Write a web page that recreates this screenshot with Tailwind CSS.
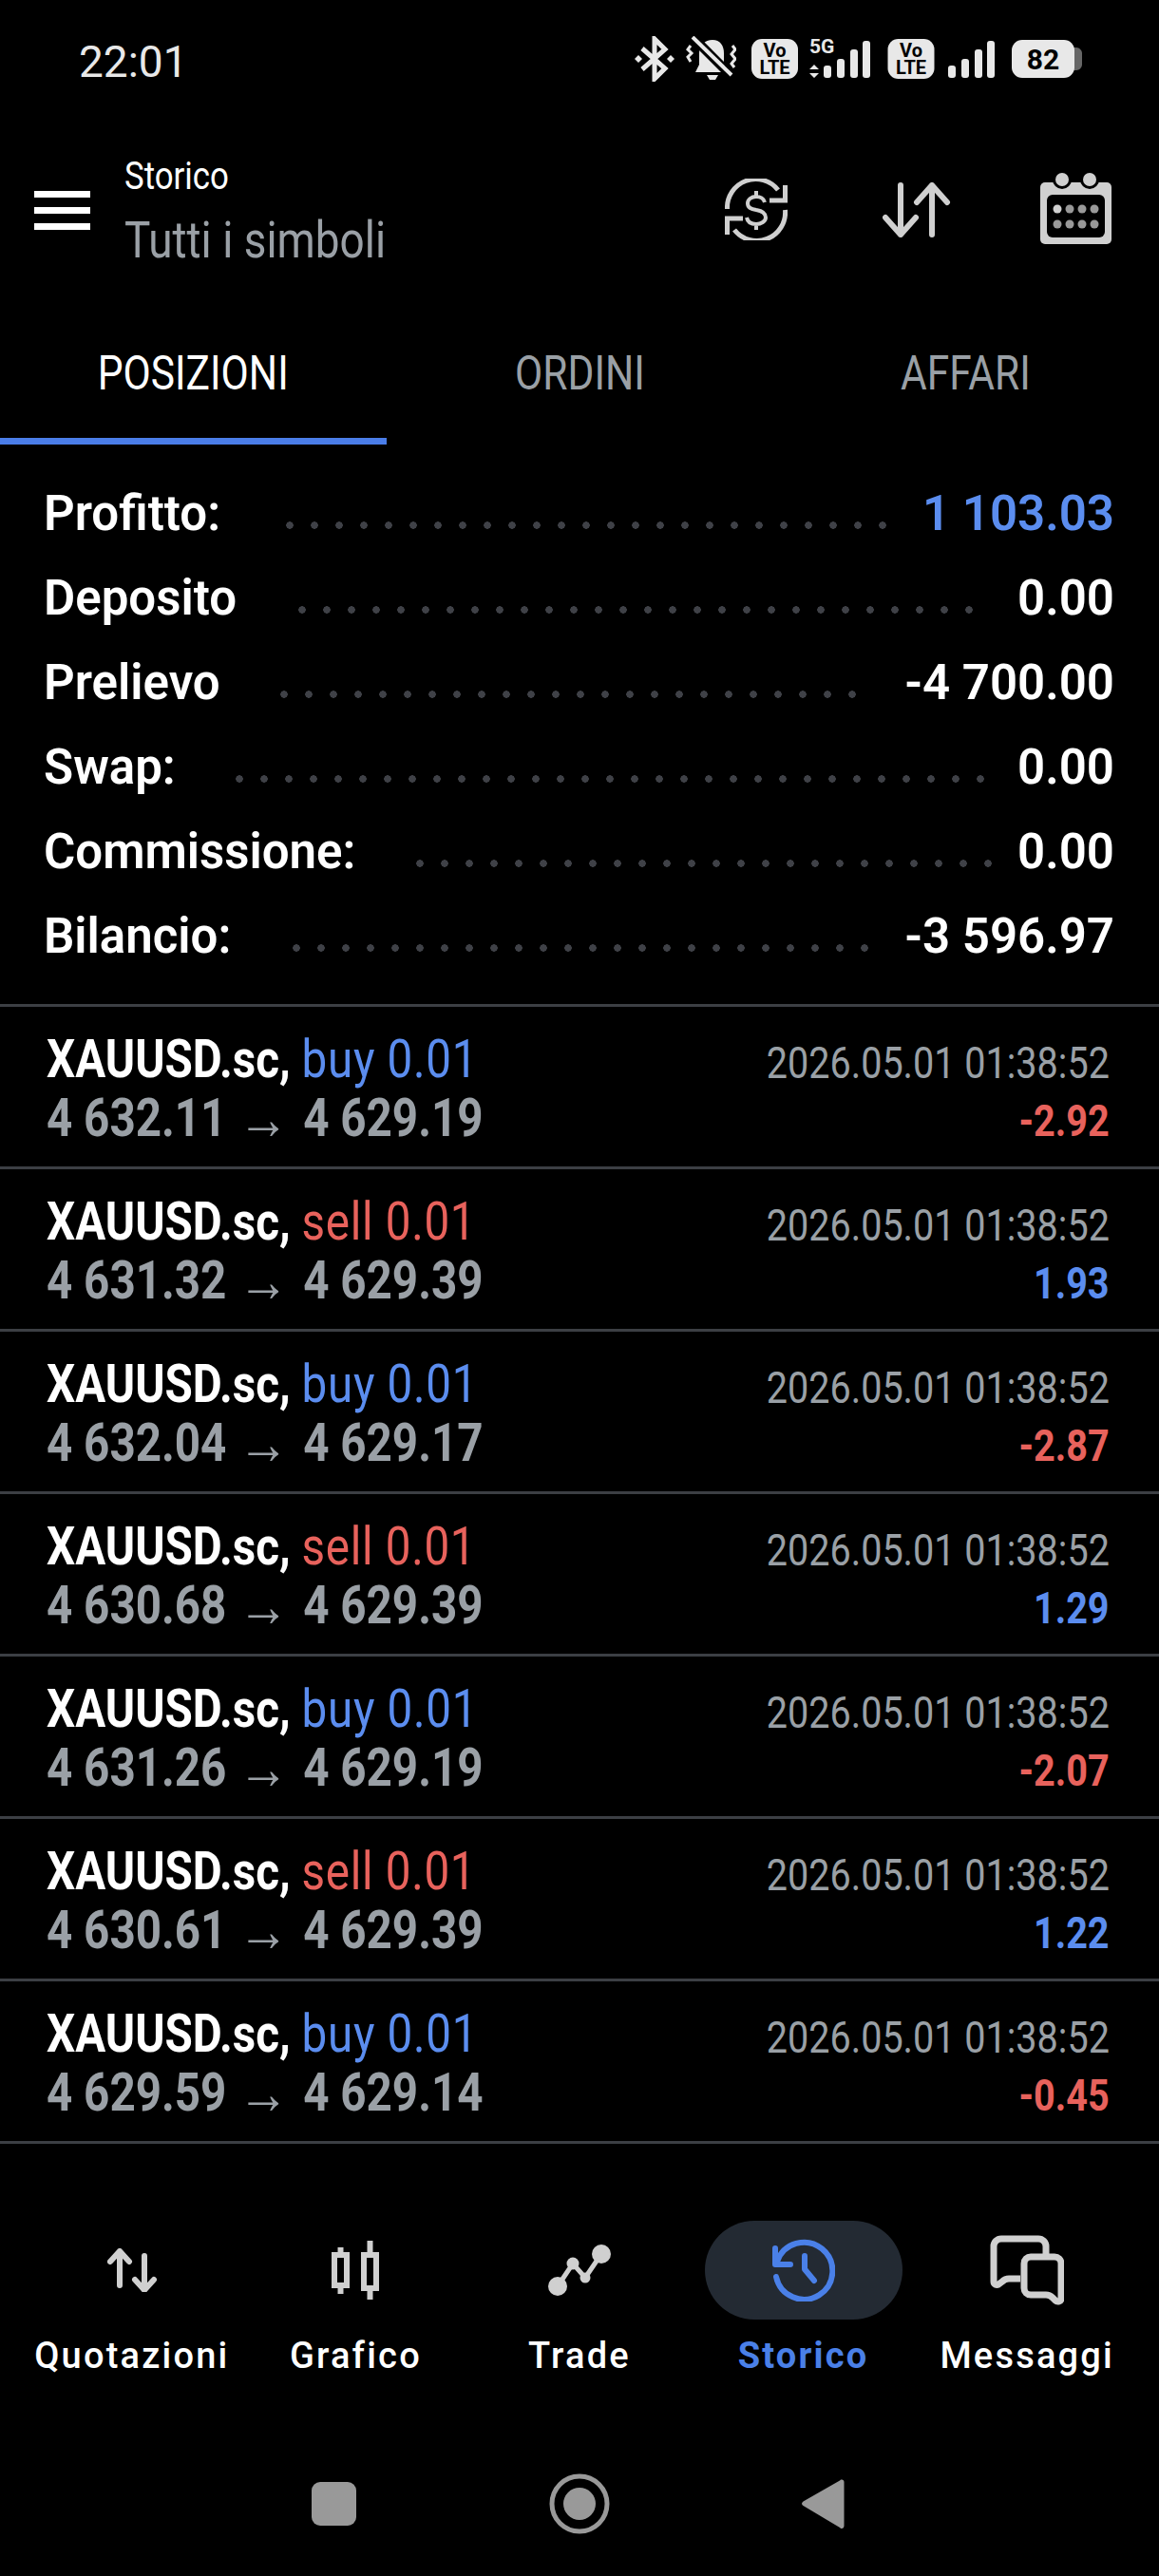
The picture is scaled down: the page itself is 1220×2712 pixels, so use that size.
<!DOCTYPE html>
<html lang="it" class="bg-black">
<head>
  <meta charset="UTF-8">
  <meta name="viewport" content="width=device-width, initial-scale=1.0">
  <title>Storico</title>
  <script src="https://cdn.jsdelivr.net/npm/@tailwindcss/browser@4"></script>
</head>
<body class="w-[1220px] h-[2712px] overflow-hidden bg-black text-white font-[Roboto,sans-serif]">

  <!-- status bar -->
  <div class="h-[130px] flex items-start pt-[38px] pl-[83px] pr-[80px]">
    <span class="text-[46px] leading-[54px] text-[#e8e8e8]">22:01</span>
    <div class="ml-auto flex text-[#e8e8e8]">
      <svg class="mr-[12px]" width="42" height="48" viewBox="0 0 42 48" fill="none" stroke="#e8e8e8" stroke-width="5"><path d="M8 13l24 21-11 11V3l11 11L8 35"/><path d="M4 20l4 4-4 4-4-4zM38 20l4 4-4 4-4-4z" fill="#e8e8e8" stroke="none"/></svg>
      <svg class="mr-[16px]" width="53" height="48" viewBox="0 0 53 48" fill="none"><path d="M28 4c8 0 12 6 12 14v12l4 8H10l4-8V18c0-8 6-14 14-14z" fill="#e8e8e8"/><path d="M22 41h12l-3 5h-6z" fill="#e8e8e8"/><path d="M6 0l42 42" stroke="#000" stroke-width="10"/><path d="M7 1l41 40" stroke="#e8e8e8" stroke-width="4"/><path d="M5 10l-3 4 4 4-4 4 3 5M49 10l3 4-4 5 4 5-4 5 3 4" stroke="#e8e8e8" stroke-width="3"/></svg>
      <svg class="mr-[12px]" width="49" height="48" viewBox="0 0 49 48"><rect y="3" width="49" height="42" rx="11" fill="#e8e8e8"/><text text-anchor="middle" font-family="Roboto" font-weight="700" font-size="20" fill="#000"><tspan x="24.5" y="22">Vo</tspan><tspan x="24.5" y="40">LTE</tspan></text></svg>
      <svg class="mr-[16px]" width="66" height="48" viewBox="0 0 66 48"><text x="0" y="18" font-family="Roboto" font-weight="700" font-size="21" fill="#e8e8e8">5G</text><path d="M5 30l5 5H0zM5 44l5-5H0z" fill="#e8e8e8"/><rect x="15" y="31" width="8" height="13" rx="3" fill="#e8e8e8"/><rect x="29" y="24" width="8" height="20" rx="3" fill="#e8e8e8"/><rect x="43" y="14" width="8" height="30" rx="3" fill="#e8e8e8"/><rect x="56" y="5" width="8" height="39" rx="3" fill="#e8e8e8"/></svg>
      <svg class="mr-[14px]" width="50" height="48" viewBox="0 0 49 48"><rect y="3" width="49" height="42" rx="11" fill="#e8e8e8"/><text text-anchor="middle" font-family="Roboto" font-weight="700" font-size="20" fill="#000"><tspan x="24.5" y="22">Vo</tspan><tspan x="24.5" y="40">LTE</tspan></text></svg>
      <svg class="mr-[18px]" width="49" height="48" viewBox="0 0 49 48"><rect x="0" y="31" width="8" height="13" rx="3" fill="#e8e8e8"/><rect x="14" y="24" width="8" height="20" rx="3" fill="#e8e8e8"/><rect x="28" y="14" width="8" height="30" rx="3" fill="#e8e8e8"/><rect x="41" y="5" width="8" height="39" rx="3" fill="#e8e8e8"/></svg>
      <svg width="75" height="48" viewBox="0 0 75 48"><path d="M65 12h3c3 0 6 3 6 6v12c0 3-3 6-6 6h-3z" fill="#666"/><rect y="4" width="66" height="40" rx="11" fill="#e8e8e8"/><text x="33" y="35" text-anchor="middle" font-family="Roboto" font-weight="700" font-size="30" fill="#000">82</text></svg>
    </div>
  </div>

  <!-- header -->
  <header class="h-[190px] flex items-start">
    <div class="w-[59px] ml-[36px] mt-[71px] flex flex-col gap-[10px]">
      <div class="h-[7px] bg-white"></div>
      <div class="h-[7px] bg-white"></div>
      <div class="h-[7px] bg-white"></div>
    </div>
    <div class="ml-[36px] mt-[33px] flex flex-col">
      <span class="text-[40px] leading-[46px] whitespace-nowrap origin-left scale-x-[0.87]">Storico</span>
      <span class="text-[54px] leading-[62px] mt-[13px] text-[#9aa0a6] whitespace-nowrap origin-left scale-x-[0.85]">Tutti i simboli</span>
    </div>
    <svg class="ml-auto mt-[58px]" width="66" height="65" viewBox="0 0 66 65" fill="none" stroke="#d0d0d0" stroke-width="5">
      <path d="M2.500 32A30 30 0 0 1 56 12"/><path d="M63.500 7v16H47"/><path d="M63.500 33A30 30 0 0 1 10 54"/><path d="M2.500 59V42H19"/>
      <path d="M42 25c-1-4-5-6-9-6-5 0-9 3-9 7 0 5 4 6 9 7 6 1 10 3 10 8 0 4-5 7-10 7-5 0-9-2-10-7M33 13v6M33 48v6" stroke-width="4"/>
    </svg>
    <svg class="ml-[100px] mt-[62px]" width="72" height="58" viewBox="0 0 72 58" fill="none" stroke="#d0d0d0" stroke-width="6" stroke-linecap="round" stroke-linejoin="round">
      <path d="M19 3v52M3 37l16 18 16-18"/><path d="M52 3v52M36 21L52 3l16 18"/>
    </svg>
    <svg class="ml-[94px] mr-[50px] mt-[52px]" width="75" height="75" viewBox="0 0 75 75">
      <rect y="10" width="75" height="65" rx="5" fill="#d0d0d0"/><rect x="7" y="23" width="61" height="45" rx="6" fill="#000"/>
      <circle cx="23" cy="7" r="10" fill="#000"/><circle cx="52" cy="7" r="10" fill="#000"/><circle cx="23" cy="7" r="7" fill="#d0d0d0"/><circle cx="52" cy="7" r="7" fill="#d0d0d0"/>
      <circle cx="18" cy="38" r="4.500" fill="#d0d0d0"/><circle cx="31" cy="38" r="4.500" fill="#999"/><circle cx="44" cy="38" r="4.500" fill="#999"/><circle cx="57" cy="38" r="4.500" fill="#999"/>
      <circle cx="18" cy="54" r="4.500" fill="#999"/><circle cx="31" cy="54" r="4.500" fill="#999"/><circle cx="44" cy="54" r="4.500" fill="#999"/><circle cx="57" cy="54" r="4.500" fill="#999"/>
    </svg>
  </header>

  <!-- tabs -->
  <nav class="h-[148px] grid grid-cols-3">
    <div class="flex flex-col items-center border-b-[7px] border-[#4a7de8]"><span class="mt-[45px] text-[50px] leading-[56px] scale-x-[0.85]">POSIZIONI</span></div>
    <div class="flex flex-col items-center"><span class="mt-[45px] text-[50px] leading-[56px] text-[#9aa0a6] scale-x-[0.85]">ORDINI</span></div>
    <div class="flex flex-col items-center"><span class="mt-[45px] text-[50px] leading-[56px] text-[#9aa0a6] scale-x-[0.85]">AFFARI</span></div>
  </nav>

  <!-- summary -->
  <section class="h-[589px] pt-[29px] pl-[46px] pr-[47px] flex flex-col text-[51px] leading-[88px] font-semibold">
    <div class="h-[89px] flex"><span class="w-[246px]">Profitto:</span><div class="w-[650px] h-[8px] mt-[52px] bg-[radial-gradient(circle,#3f4147_3.5px,transparent_4px)] bg-[length:26px_8px] bg-repeat-x"></div><span class="flex-1 text-right text-[#5b8def] whitespace-nowrap">1 103.03</span></div>
    <div class="h-[89px] flex"><span class="w-[259px]">Deposito</span><div class="w-[728px] h-[8px] mt-[52px] bg-[radial-gradient(circle,#3f4147_3.5px,transparent_4px)] bg-[length:26px_8px] bg-repeat-x"></div><span class="flex-1 text-right">0.00</span></div>
    <div class="h-[89px] flex"><span class="w-[240px]">Prelievo</span><div class="w-[624px] h-[8px] mt-[52px] bg-[radial-gradient(circle,#3f4147_3.5px,transparent_4px)] bg-[length:26px_8px] bg-repeat-x"></div><span class="flex-1 text-right whitespace-nowrap">-4 700.00</span></div>
    <div class="h-[89px] flex"><span class="w-[193px]">Swap:</span><div class="w-[806px] h-[8px] mt-[52px] bg-[radial-gradient(circle,#3f4147_3.5px,transparent_4px)] bg-[length:26px_8px] bg-repeat-x"></div><span class="flex-1 text-right">0.00</span></div>
    <div class="h-[89px] flex"><span class="w-[383px] whitespace-nowrap">Commissione:</span><div class="w-[624px] h-[8px] mt-[52px] bg-[radial-gradient(circle,#3f4147_3.5px,transparent_4px)] bg-[length:26px_8px] bg-repeat-x"></div><span class="flex-1 text-right">0.00</span></div>
    <div class="h-[89px] flex"><span class="w-[253px]">Bilancio:</span><div class="w-[624px] h-[8px] mt-[52px] bg-[radial-gradient(circle,#3f4147_3.5px,transparent_4px)] bg-[length:26px_8px] bg-repeat-x"></div><span class="flex-1 text-right whitespace-nowrap">-3 596.97</span></div>
  </section>

  <!-- deals -->
  <section class="border-t-[3px] border-[#3c3f44]">
    <div class="h-[171px] border-b-[3px] border-[#3c3f44] flex justify-between pl-[49px] pr-[52px] pt-[24px]">
      <div class="flex flex-col">
        <div class="text-[55px] leading-[62px] whitespace-nowrap origin-left scale-x-[0.865]"><span class="font-bold">XAUUSD.sc,</span> <span class="text-[#5b8def] tracking-[0.8px]">buy 0.01</span></div>
        <div class="text-[55px] leading-[62px] font-bold text-[#9aa0a6] whitespace-nowrap origin-left scale-x-[0.865]">4 632.11 <span class="text-[62px] leading-none font-normal align-[-3px] mr-[4px]">→</span> 4 629.19</div>
      </div>
      <div class="flex flex-col items-end mt-[5px]">
        <span class="text-[46px] leading-[61px] text-[#9aa0a6] whitespace-nowrap origin-right scale-x-[0.86]">2026.05.01 01:38:52</span>
        <span class="text-[46px] leading-[61px] font-bold text-[#e8625c] origin-right scale-x-[0.86]">-2.92</span>
      </div>
    </div>
    <div class="h-[171px] border-b-[3px] border-[#3c3f44] flex justify-between pl-[49px] pr-[52px] pt-[24px]">
      <div class="flex flex-col">
        <div class="text-[55px] leading-[62px] whitespace-nowrap origin-left scale-x-[0.865]"><span class="font-bold">XAUUSD.sc,</span> <span class="text-[#e8625c] tracking-[0.8px]">sell 0.01</span></div>
        <div class="text-[55px] leading-[62px] font-bold text-[#9aa0a6] whitespace-nowrap origin-left scale-x-[0.865]">4 631.32 <span class="text-[62px] leading-none font-normal align-[-3px] mr-[4px]">→</span> 4 629.39</div>
      </div>
      <div class="flex flex-col items-end mt-[5px]">
        <span class="text-[46px] leading-[61px] text-[#9aa0a6] whitespace-nowrap origin-right scale-x-[0.86]">2026.05.01 01:38:52</span>
        <span class="text-[46px] leading-[61px] font-bold text-[#5b8def] origin-right scale-x-[0.86]">1.93</span>
      </div>
    </div>
    <div class="h-[171px] border-b-[3px] border-[#3c3f44] flex justify-between pl-[49px] pr-[52px] pt-[24px]">
      <div class="flex flex-col">
        <div class="text-[55px] leading-[62px] whitespace-nowrap origin-left scale-x-[0.865]"><span class="font-bold">XAUUSD.sc,</span> <span class="text-[#5b8def] tracking-[0.8px]">buy 0.01</span></div>
        <div class="text-[55px] leading-[62px] font-bold text-[#9aa0a6] whitespace-nowrap origin-left scale-x-[0.865]">4 632.04 <span class="text-[62px] leading-none font-normal align-[-3px] mr-[4px]">→</span> 4 629.17</div>
      </div>
      <div class="flex flex-col items-end mt-[5px]">
        <span class="text-[46px] leading-[61px] text-[#9aa0a6] whitespace-nowrap origin-right scale-x-[0.86]">2026.05.01 01:38:52</span>
        <span class="text-[46px] leading-[61px] font-bold text-[#e8625c] origin-right scale-x-[0.86]">-2.87</span>
      </div>
    </div>
    <div class="h-[171px] border-b-[3px] border-[#3c3f44] flex justify-between pl-[49px] pr-[52px] pt-[24px]">
      <div class="flex flex-col">
        <div class="text-[55px] leading-[62px] whitespace-nowrap origin-left scale-x-[0.865]"><span class="font-bold">XAUUSD.sc,</span> <span class="text-[#e8625c] tracking-[0.8px]">sell 0.01</span></div>
        <div class="text-[55px] leading-[62px] font-bold text-[#9aa0a6] whitespace-nowrap origin-left scale-x-[0.865]">4 630.68 <span class="text-[62px] leading-none font-normal align-[-3px] mr-[4px]">→</span> 4 629.39</div>
      </div>
      <div class="flex flex-col items-end mt-[5px]">
        <span class="text-[46px] leading-[61px] text-[#9aa0a6] whitespace-nowrap origin-right scale-x-[0.86]">2026.05.01 01:38:52</span>
        <span class="text-[46px] leading-[61px] font-bold text-[#5b8def] origin-right scale-x-[0.86]">1.29</span>
      </div>
    </div>
    <div class="h-[171px] border-b-[3px] border-[#3c3f44] flex justify-between pl-[49px] pr-[52px] pt-[24px]">
      <div class="flex flex-col">
        <div class="text-[55px] leading-[62px] whitespace-nowrap origin-left scale-x-[0.865]"><span class="font-bold">XAUUSD.sc,</span> <span class="text-[#5b8def] tracking-[0.8px]">buy 0.01</span></div>
        <div class="text-[55px] leading-[62px] font-bold text-[#9aa0a6] whitespace-nowrap origin-left scale-x-[0.865]">4 631.26 <span class="text-[62px] leading-none font-normal align-[-3px] mr-[4px]">→</span> 4 629.19</div>
      </div>
      <div class="flex flex-col items-end mt-[5px]">
        <span class="text-[46px] leading-[61px] text-[#9aa0a6] whitespace-nowrap origin-right scale-x-[0.86]">2026.05.01 01:38:52</span>
        <span class="text-[46px] leading-[61px] font-bold text-[#e8625c] origin-right scale-x-[0.86]">-2.07</span>
      </div>
    </div>
    <div class="h-[171px] border-b-[3px] border-[#3c3f44] flex justify-between pl-[49px] pr-[52px] pt-[24px]">
      <div class="flex flex-col">
        <div class="text-[55px] leading-[62px] whitespace-nowrap origin-left scale-x-[0.865]"><span class="font-bold">XAUUSD.sc,</span> <span class="text-[#e8625c] tracking-[0.8px]">sell 0.01</span></div>
        <div class="text-[55px] leading-[62px] font-bold text-[#9aa0a6] whitespace-nowrap origin-left scale-x-[0.865]">4 630.61 <span class="text-[62px] leading-none font-normal align-[-3px] mr-[4px]">→</span> 4 629.39</div>
      </div>
      <div class="flex flex-col items-end mt-[5px]">
        <span class="text-[46px] leading-[61px] text-[#9aa0a6] whitespace-nowrap origin-right scale-x-[0.86]">2026.05.01 01:38:52</span>
        <span class="text-[46px] leading-[61px] font-bold text-[#5b8def] origin-right scale-x-[0.86]">1.22</span>
      </div>
    </div>
    <div class="h-[171px] border-b-[3px] border-[#3c3f44] flex justify-between pl-[49px] pr-[52px] pt-[24px]">
      <div class="flex flex-col">
        <div class="text-[55px] leading-[62px] whitespace-nowrap origin-left scale-x-[0.865]"><span class="font-bold">XAUUSD.sc,</span> <span class="text-[#5b8def] tracking-[0.8px]">buy 0.01</span></div>
        <div class="text-[55px] leading-[62px] font-bold text-[#9aa0a6] whitespace-nowrap origin-left scale-x-[0.865]">4 629.59 <span class="text-[62px] leading-none font-normal align-[-3px] mr-[4px]">→</span> 4 629.14</div>
      </div>
      <div class="flex flex-col items-end mt-[5px]">
        <span class="text-[46px] leading-[61px] text-[#9aa0a6] whitespace-nowrap origin-right scale-x-[0.86]">2026.05.01 01:38:52</span>
        <span class="text-[46px] leading-[61px] font-bold text-[#e8625c] origin-right scale-x-[0.86]">-0.45</span>
      </div>
    </div>
  </section>

  <!-- bottom navigation -->
  <nav class="mt-[81px] px-[21px] grid grid-cols-5 text-[38px] leading-[44px] tracking-[2.2px] font-medium text-center">
    <div class="flex flex-col items-center">
      <div class="h-[104px] w-[208px] flex items-center justify-center">
        <svg width="52" height="46" viewBox="0 0 52 46" fill="none" stroke="#d0d0d0" stroke-width="6" stroke-linecap="round" stroke-linejoin="round"><path d="M13 39V3M3 14L13 3l10 11"/><path d="M39 8v36M29 33l10 11 10-11"/></svg>
      </div>
      <span class="mt-[16px]">Quotazioni</span>
    </div>
    <div class="flex flex-col items-center">
      <div class="h-[104px] w-[208px] flex items-center justify-center">
        <svg width="50" height="62" viewBox="0 0 50 62" fill="none" stroke="#d0d0d0" stroke-width="6"><rect x="3" y="15" width="13" height="32"/><path d="M9.500 7v8M9.500 47v9"/><rect x="34" y="15" width="13" height="35"/><path d="M40.500 0v15M40.500 50v12"/></svg>
      </div>
      <span class="mt-[16px]">Grafico</span>
    </div>
    <div class="flex flex-col items-center">
      <div class="h-[104px] w-[208px] flex items-center justify-center">
        <svg width="68" height="57" viewBox="0 0 68 57" fill="#d0d0d0" stroke="none"><path d="M11 45L27 21l13 15 17-25" fill="none" stroke="#d0d0d0" stroke-width="5"/><circle cx="11" cy="45" r="10"/><circle cx="27" cy="21" r="6.500"/><circle cx="40" cy="36" r="5.500"/><circle cx="57" cy="11" r="10"/></svg>
      </div>
      <span class="mt-[16px]">Trade</span>
    </div>
    <div class="flex flex-col items-center">
      <div class="h-[104px] w-[208px] rounded-full bg-[#232a33] flex items-center justify-center">
        <svg width="66" height="66" viewBox="0 0 66 66" fill="none" stroke="#4a80e8" stroke-width="6" stroke-linecap="round" stroke-linejoin="round"><path d="M5 24A30 30 0 1 1 4 40"/><path d="M3 10v17h16"/><path d="M34 18v14l10 12"/></svg>
      </div>
      <span class="mt-[16px] font-bold text-[#4a80e8]">Storico</span>
    </div>
    <div class="flex flex-col items-center">
      <div class="h-[104px] w-[208px] flex items-center justify-center">
        <svg width="78" height="74" viewBox="0 0 78 74" fill="none" stroke="#d0d0d0" stroke-width="7" stroke-linejoin="round"><path d="M32 46H20c-3 0-5 1-7 3l-4 3c-2 1-5 0-5-3V12a8 8 0 0 1 8-8h39a8 8 0 0 1 8 8v11"/><path d="M43 23h25a7 7 0 0 1 7 7v37c0 3-4 4-6 2l-3-3c-2-2-4-3-7-3H43a7 7 0 0 1-7-7V30a7 7 0 0 1 7-7z"/></svg>
      </div>
      <span class="mt-[16px]">Messaggi</span>
    </div>
  </nav>

  <!-- android buttons -->
  <div class="mt-[102px] flex items-center h-[64px]">
    <div class="ml-[328px] w-[47px] h-[46px] rounded-[9px] bg-[#999]"></div>
    <svg class="ml-[203px]" width="64" height="64" viewBox="0 0 64 64"><circle cx="32" cy="32" r="29" fill="none" stroke="#999" stroke-width="5"/><circle cx="32" cy="32" r="17" fill="#999"/></svg>
    <svg class="ml-[202px]" width="45" height="54" viewBox="0 0 45 54"><path d="M42 1.500c1.500 0 2.500 1 2.500 2.500v46c0 2-1 3-2.500 3-1 0-1.500-.5-2-1L1.500 29c-2-1.500-2-3 0-4.500L40 2.500c.5-.5 1-1 2-1z" fill="#999"/></svg>
  </div>

</body>
</html>
